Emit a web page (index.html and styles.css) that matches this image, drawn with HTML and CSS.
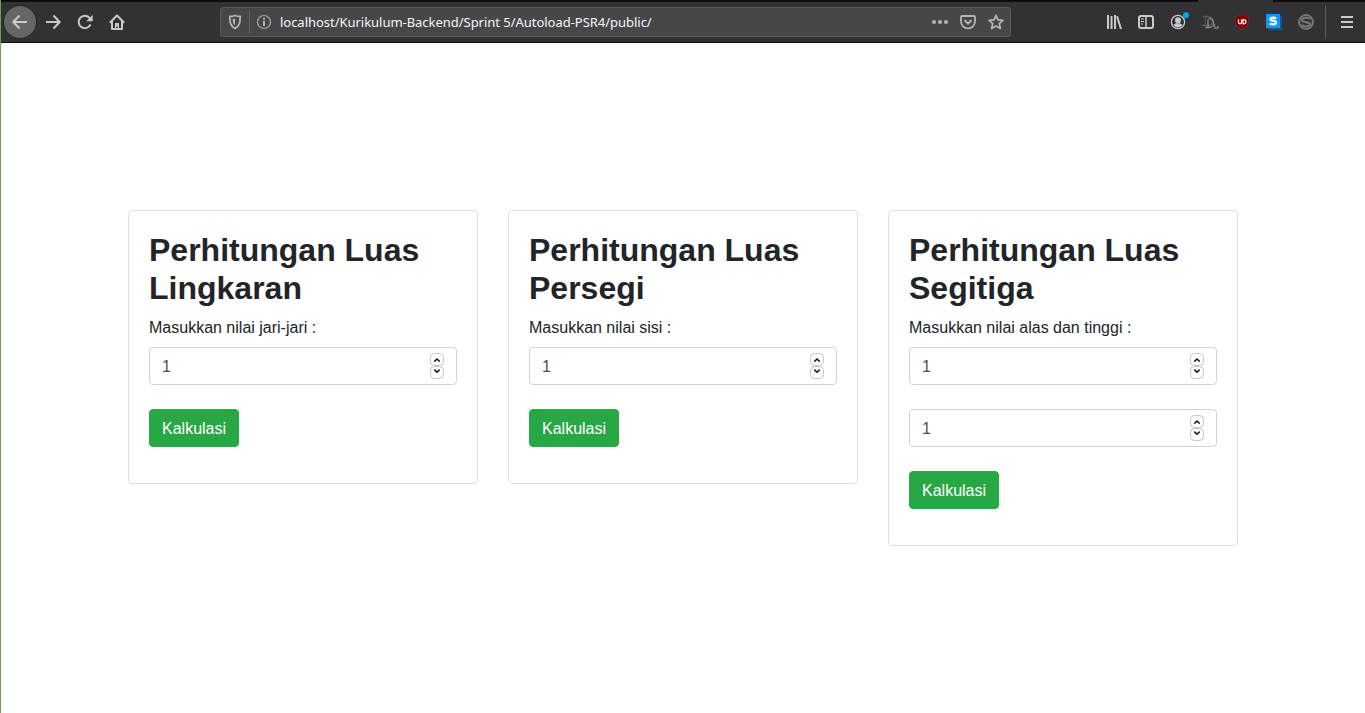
FILE: index.html
```html
<!DOCTYPE html>
<html lang="id">
<head>
<meta charset="utf-8">
<title>Perhitungan Luas</title>
<link rel="stylesheet" href="styles.css">
</head>
<body>
<svg width="0" height="0" class="defs">
  <symbol id="spin" viewBox="0 0 14 26">
    <rect x=".5" y=".5" width="13" height="12" rx="4" fill="#fff" stroke="#c9c3be"/>
    <rect x=".5" y="13.5" width="13" height="12" rx="4" fill="#fff" stroke="#c9c3be"/>
    <path d="M4.300 8.600 7 6l2.700 2.600M4.300 16.600 7 19.200l2.700-2.600" fill="none" stroke="#16191c" stroke-width="1.500"/>
  </symbol>
</svg>
<header class="toolbar">
  <div class="tab-edge"><span class="edge-left"></span><span class="edge-right"></span></div>
  <nav class="nav">
    <span class="back"><svg width="16" height="16" viewBox="0 0 16 16"><path d="M15 8H1.500M7.500 1.500 1.300 8l6.200 6.500" class="line"/></svg></span>
    <svg width="16" height="16" viewBox="0 0 16 16"><path d="M1 8h13.500M8.500 1.500 14.700 8l-6.200 6.500" class="line"/></svg>
    <svg width="16" height="16" viewBox="0 0 16 16"><path d="M13.500 10.500A6.200 6.200 0 1 1 12.500 3.800l1 1.300" class="line"/><path d="M15.700.8v6.400H9.300z" fill="#c9c9ca"/></svg>
    <svg width="16" height="16" viewBox="0 0 16 16"><path d="M.8 8.700 8 1.500l7.200 7.200" class="line"/><path d="M3 7v8h10V7" class="line"/><path d="M6 14.500V9h4v5.500H8.700v-2H7.300v2z" fill="#c9c9ca"/></svg>
  </nav>
  <div class="urlbar">
    <svg class="shield" width="14" height="16" viewBox="0 0 14 16"><path d="M7 1.500c1.800.7 3.500 1 5.200 1 0 6-.7 9.500-5.200 12C2.500 12 1.800 8.500 1.800 2.500c1.700 0 3.400-.3 5.200-1Z" fill="none" stroke="#b5b5b6" stroke-width="1.800"/><path d="M7 4.500c-.9.400-1.700.5-2.400.6.200 3 .6 5 2.400 6.400z" fill="#b5b5b6"/></svg>
    <span class="url-sep"></span>
    <svg class="info" width="16" height="16" viewBox="0 0 16 16"><circle cx="8" cy="8" r="6.500" fill="none" stroke="#a9a9aa" stroke-width="1.200"/><path d="M8 3.800v1.900M8 7v5" stroke="#b5b5b6" stroke-width="1.900"/></svg>
    <span class="url">localhost/Kurikulum-Backend/Sprint 5/Autoload-PSR4/public/</span>
    <div class="url-actions">
      <svg width="16" height="16" viewBox="0 0 16 16" fill="#b5b5b6"><circle cx="2" cy="8" r="2"/><circle cx="8" cy="8" r="2"/><circle cx="14" cy="8" r="2"/></svg>
      <svg width="16" height="16" viewBox="0 0 16 16" fill="none" stroke="#b5b5b6" stroke-width="1.800"><path d="M2.200 2h11.600q1.200 0 1.200 1.200v4.300a7 6.800 0 0 1-14 0V3.200Q1 2 2.200 2Z"/><path d="m4.500 6.200 3.500 3.400 3.500-3.400" stroke-width="2"/></svg>
      <svg width="16" height="16" viewBox="0 0 16 16"><path d="m8 1.300 2 4.500 5 .5-3.700 3.300 1.100 4.900L8 12l-4.400 2.500 1.100-4.900L1 6.300l5-.5Z" fill="none" stroke="#b5b5b6" stroke-width="1.700" stroke-linejoin="round"/></svg>
    </div>
  </div>
  <div class="tools">
    <svg width="16" height="16" viewBox="0 0 16 16"><path d="M2 1v14M5.500 2v13M9 1v14M11 2.200 15 15" class="line"/></svg>
    <svg width="16" height="16" viewBox="0 0 16 16"><rect x="1" y="2" width="14" height="12" rx="2" class="line"/><path d="M8 2v12" stroke="#c9c9ca" stroke-width="1.500"/><path d="M3 5h3M3 7.500h3M3 10h2" stroke="#c9c9ca" stroke-width="1.100"/></svg>
    <svg class="account" width="20" height="20" viewBox="-2 -2 20 20"><circle cx="8" cy="8" r="6.600" fill="none" stroke="#c9c9ca" stroke-width="1.300"/><circle cx="8" cy="6.300" r="3" fill="#c9c9ca"/><path d="M3.300 10.500c1 .2 2-.9 2.900-1.300h3.600c.9.400 1.900 1.500 2.900 1.300C11.500 12.600 9.800 13.300 8 13.300s-3.500-.7-4.700-2.800Z" fill="#c9c9ca"/><circle cx="16" cy="1.200" r="3" fill="#00a5f0"/></svg>
    <svg width="16" height="16" viewBox="0 0 16 16" fill="none"><path d="M1 2.500h4c7.500 0 7.500 9 0 9H0" stroke="#5c5c5e" stroke-width="1.700"/><path d="M3.500 3v8" stroke="#4c4c4e" stroke-width="1.500"/><path d="M6.500 4.500c7 0 7 9 0 9H3.500M6 5.500v7.500" stroke="#8a8a8c" stroke-width="1.300"/><path d="M12.500 10v4H16v-2" stroke="#7b7b7d" stroke-width="1.500"/></svg>
    <svg width="16" height="16" viewBox="0 0 16 16"><path d="M8 .5c2 1.300 4 1.700 6.700 1.800V7c0 4-2.700 6.500-6.700 8.700C4 13.500 1.300 11 1.300 7V2.300C4 2.200 6 1.800 8 .5Z" fill="#850006" stroke="#6c3b3d" stroke-width=".6"/><path d="M4.500 5.500v2.800q0 1.500 1.500 1.500t1.500-1.500V5.500M9 5.500v4.300q3 .2 3-2.100T9 5.500Z" fill="none" stroke="#fff" stroke-width="1.200"/></svg>
    <svg width="16" height="16" viewBox="0 0 16 16"><path d="M14 2h2v14H2v-2z" fill="#075a9d"/><path d="M0 0h14v14H0z" fill="#1296fb"/><path d="M10 4.600Q9.200 3.600 7 3.600q-2.600 0-2.600 1.600 0 1.200 2.600 1.500 3 .4 3 1.900 0 1.700-3 1.700-2.300 0-3.200-1.100" fill="none" stroke="#fff" stroke-width="2.200"/></svg>
    <svg width="16" height="16" viewBox="0 0 16 16" fill="none" stroke="#777778"><circle cx="8" cy="8" r="6.900" stroke-width="2"/><path d="M12.500 5Q8 2.500 4.500 5 3 6.800 5.500 7.500L11 9q2.200 1.200 0 2.600Q8 13.500 3.500 11.200" stroke-width="2"/></svg>
    <span class="tool-sep"></span>
    <svg width="16" height="16" viewBox="0 0 16 16"><path d="M2 3h12M2 8h12M2 13h12" class="line"/></svg>
  </div>
</header>
<main class="page">
  <section class="card">
    <h2>Perhitungan Luas Lingkaran</h2>
    <label for="r">Masukkan nilai jari-jari :</label>
    <div class="field"><input id="r" type="text" value="1"><svg width="14" height="26"><use href="#spin"/></svg></div>
    <button class="btn">Kalkulasi</button>
  </section>
  <section class="card">
    <h2>Perhitungan Luas Persegi</h2>
    <label for="s">Masukkan nilai sisi :</label>
    <div class="field"><input id="s" type="text" value="1"><svg width="14" height="26"><use href="#spin"/></svg></div>
    <button class="btn">Kalkulasi</button>
  </section>
  <section class="card">
    <h2>Perhitungan Luas Segitiga</h2>
    <label for="a">Masukkan nilai alas dan tinggi :</label>
    <div class="field"><input id="a" type="text" value="1"><svg width="14" height="26"><use href="#spin"/></svg></div>
    <div class="field"><input type="text" value="1"><svg width="14" height="26"><use href="#spin"/></svg></div>
    <button class="btn">Kalkulasi</button>
  </section>
</main>
</body>
</html>
```
FILE: styles.css
```css
* { box-sizing: border-box; }
body {
  margin: 0;
  height: 713px;
  overflow: hidden;
  background: #fff;
  border-left: 1px solid #74a04c;
  font: 16px/24px "Liberation Sans", Arial, sans-serif;
  color: #212529;
}
svg { display: block; flex: none; overflow: visible; }
.defs { position: absolute; }
.line { fill: none; stroke: #c9c9ca; stroke-width: 2; stroke-linejoin: round; }

.toolbar {
  position: relative;
  display: flex;
  align-items: center;
  height: 43px;
  padding: 2px 10px 1px 3px;
  background: #323234;
  border-bottom: 1px solid #0c0c0d;
}
.tab-edge {
  position: absolute;
  inset: 0 0 auto 0;
  display: flex;
  justify-content: space-between;
  height: 2px;
}
.edge-left { width: 1197px; background: #0c0c0d; }
.edge-right { width: 92px; background: #0c0c0d; }
.nav { display: flex; align-items: center; gap: 16px; }
.back {
  display: grid;
  place-items: center;
  width: 32px;
  height: 32px;
  margin-right: -7px;
  border-radius: 50%;
  background: #666667;
  box-shadow: 0 0 0 1px #29292b;
}
.urlbar {
  display: flex;
  align-items: center;
  width: 791px;
  height: 30px;
  margin-left: 95px;
  padding: 0 6px 0 7px;
  background: #474749;
  border: 1px solid #5b5b5d;
  border-radius: 3px;
}
.url-sep { width: 1px; height: 22px; margin: 0 6px 0 7px; background: #626264; }
.url {
  margin-left: 8px;
  font: 13px/20px "Noto Sans", sans-serif;
  letter-spacing: -0.03px;
  color: #f5f5f6;
  white-space: nowrap;
}
.url-actions { display: flex; gap: 12px; margin-left: auto; }
.tools { display: flex; align-items: center; gap: 16px; margin-left: auto; }
.account { margin: -2px; }
.tool-sep { width: 1px; height: 34px; margin: 0 -3px 0 -5px; background: #5a5a5c; }

.page {
  display: flex;
  align-items: flex-start;
  gap: 30px;
  padding: 167px 0 0 127px;
}
.card {
  width: 350px;
  padding: 20px 20px 36px;
  border: 1px solid #dfdfdf;
  border-radius: 4px;
}
h2 { margin: 0 0 8px; font-size: 32px; line-height: 38.4px; font-weight: 700; }
label { display: block; margin-bottom: 7px; }
.field {
  display: flex;
  align-items: center;
  height: 38px;
  margin-bottom: 24px;
  padding: 0 12px;
  border: 1px solid #ced4da;
  border-radius: 4px;
}
.field input {
  flex: 1;
  min-width: 0;
  padding: 2px 0 0;
  border: 0;
  outline: 0;
  background: none;
  font: inherit;
  color: #495057;
}
.btn {
  display: block;
  height: 38px;
  padding: 2px 12px 0;
  border: 1px solid #28a745;
  border-radius: 4px;
  background: #28a745;
  color: #fff;
  font: inherit;
}
```
